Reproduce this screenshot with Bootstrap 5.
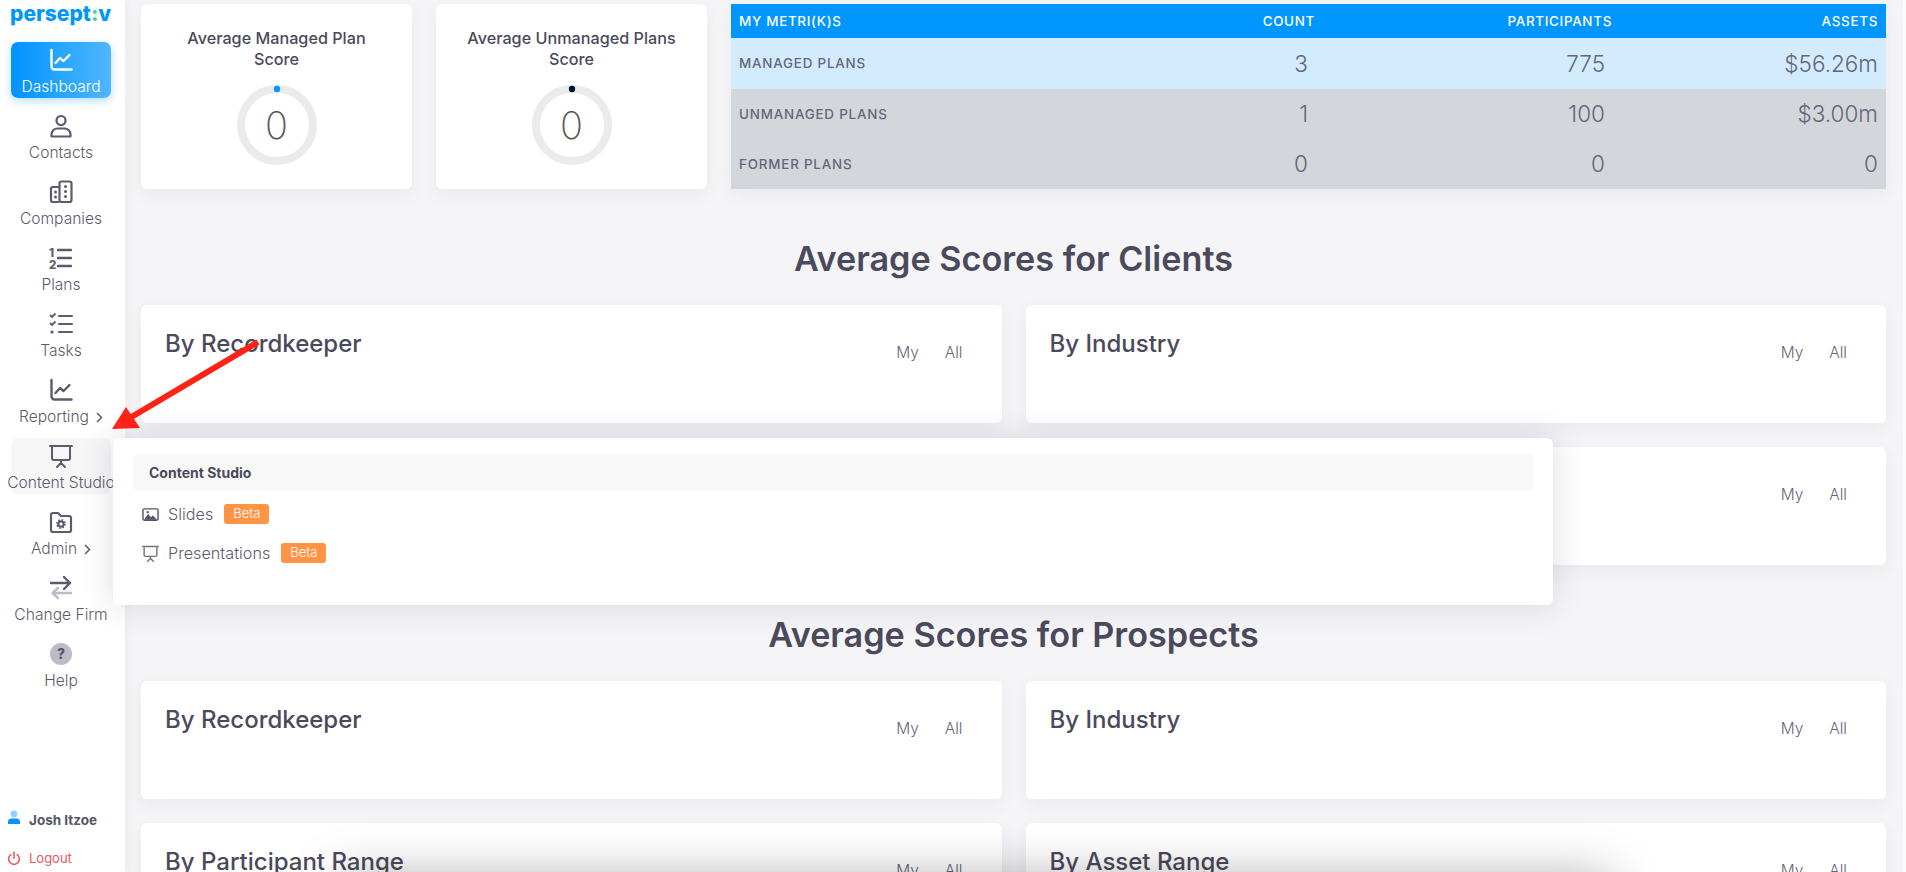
<!DOCTYPE html>
<html lang="en">
<head>
<meta charset="utf-8">
<title>Dashboard</title>
<link href="https://cdn.jsdelivr.net/npm/bootstrap@5.3.0/dist/css/bootstrap.min.css" rel="stylesheet">
<style>
html,body{height:100%;}
body{font-family:"Inter","Noto Sans",sans-serif;background:#fbfbfc;color:#4b4a5c;overflow:hidden;}
.app-shell{height:872px;position:relative;overflow:hidden;}
.side-rail{width:125px;flex:0 0 125px;background:#fff;box-shadow:2px 0 8px rgba(60,60,90,.06);z-index:2;}
.brand-word{font-family:"Inter",sans-serif;font-weight:800;font-size:21px;line-height:27px;color:#0096ff;height:42px;padding-left:10px;white-space:nowrap;}
.brand-word span{color:#44d3a8;}
.rail-list{gap:10px;padding:0 14px 0 11px;}
.rail-item{height:56px;padding-top:6px;border-radius:7px;color:#5c5b6e;font-size:15.6px;font-weight:300;line-height:20px;white-space:nowrap;text-decoration:none;}
.rail-item svg.ico{width:24px;height:24px;margin-bottom:5px;flex:none;}
.rail-item.is-active{background:linear-gradient(90deg,#0093ff,#50b7ff);color:#fff;box-shadow:0 3px 10px rgba(0,150,255,.3);}
.rail-item.is-hover{background:#f6f6f7;}
.chev{width:7px;height:11px;margin-left:7px;}
.rail-foot{padding:0 0 4px 7px;}
.who{font-size:13.5px;font-weight:700;color:#55546a;line-height:20px;height:38px;}
.bye{font-size:13px;color:#e65a60;line-height:20px;height:20px;}
.rail-foot svg{width:14px;height:15px;margin-right:8px;}
.main-pane{margin-right:3px;padding:4px 17px 0 16px;background:#f5f5f8;min-width:0;}
.score-card,.range-card{border:0;border-radius:6px;background:#fff;box-shadow:0 6px 18px rgba(60,60,90,.06);}
.score-card{width:271px;height:185px;flex:none;padding-top:24px;text-align:center;font-size:16.2px;font-weight:500;line-height:21px;}
.score-title{height:42px;padding:0 30px;}
.gauge{width:80px;height:80px;margin:15px auto 0;position:relative;}
.gauge svg{position:absolute;inset:0;}
.gauge b{position:absolute;inset:0;display:flex;align-items:center;justify-content:center;font-weight:200;font-size:38px;color:#555;}
.metric-wrap{box-shadow:0 6px 18px rgba(60,60,90,.06);height:185px;}
.metric-table{table-layout:fixed;margin:0;color:#5c5b6e;}
.metric-table th,.metric-table td{border:0;padding:0 8px;vertical-align:middle;text-align:right;}
.metric-table th{height:34px;font-size:13.4px;font-weight:500;letter-spacing:.7px;background:#0096ff;color:#fff;}
.metric-table th:first-child,.metric-table td:first-child{text-align:left;}
.metric-table td{height:50px;font-size:22.5px;font-weight:300;color:#66657a;background:#d3d7db;}
.metric-table td:first-child{font-size:13.4px;font-weight:500;letter-spacing:.8px;}
.metric-table td.pad-num{padding-right:15px;}
.metric-table tr.row-managed td{height:51px;background:#d3ecfd;}
.col-label{width:auto;}
.col-count{width:120px;}
.col-part{width:297px;}
.col-asset{width:266px;}
.section-head{font-size:34.2px;line-height:38px;font-weight:600;text-align:center;color:#4b4a5c;margin:51px 0 27px;}
.range-card{height:118px;padding:25px 39px 0 24px;}
.range-title{font-size:24px;line-height:28px;font-weight:500;margin:0;color:#4b4a5c;}
.range-toggle{gap:26px;font-size:15.5px;line-height:20px;font-weight:300;color:#66657a;margin-top:13px;}
.pop-menu{position:absolute;left:113px;top:438px;width:1440px;height:167px;background:#fff;border-radius:6px;box-shadow:0 0 32px rgba(50,50,80,.17);z-index:5;padding:16px 19px 0 20px;}
.pop-head{height:37px;background:#f8f8f9;border-radius:6px;padding-left:16px;font-size:14px;font-weight:700;color:#4b4a5c;display:flex;align-items:center;}
.pop-row{height:20px;margin-left:9px;font-size:16.2px;font-weight:300;color:#5c5b6e;gap:9px;}
.pop-row svg{width:17px;height:17px;flex:none;}
.pop-rows{gap:19px;margin-top:13px;}
.beta-tag{background:#ff9445;color:#fff;font-size:13px;font-weight:300;border-radius:3px;height:20px;width:45px;display:flex;align-items:center;justify-content:center;margin-left:2px;}
.anno-arrow{position:absolute;left:0;top:0;width:300px;height:450px;z-index:6;pointer-events:none;}
.bottom-glow{position:absolute;left:350px;width:1250px;top:888px;height:40px;box-shadow:0 0 50px 10px rgba(0,0,0,.34);z-index:4;}
</style>
</head>
<body>
<svg width="0" height="0" class="position-absolute">
<defs>
<symbol id="i-chart" viewBox="0 0 24 24"><path d="M2.5 2v16.5a3 3 0 0 0 3 3h17" fill="none" stroke="currentColor" stroke-width="2.4" stroke-linecap="round"/><path d="M6.5 15l4.5-5 3.5 3 6-6" fill="none" stroke="currentColor" stroke-width="2.4" stroke-linecap="round" stroke-linejoin="round"/></symbol>
<symbol id="i-screen" viewBox="0 0 24 24"><path d="M1 2h22" stroke="currentColor" stroke-width="2" stroke-linecap="round"/><path d="M3 3v11a2 2 0 0 0 2 2h14a2 2 0 0 0 2-2V3" fill="none" stroke="currentColor" stroke-width="2"/><path d="M12 16v3M12 19l-4 4M12 19l4 4" fill="none" stroke="currentColor" stroke-width="2" stroke-linecap="round"/></symbol>
</defs>
</svg>
<div class="app-shell d-flex">
<aside class="side-rail d-flex flex-column">
<div class="brand-word">persept<span>:</span>v</div>
<nav class="rail-list d-flex flex-column">
<a class="rail-item is-active d-flex flex-column align-items-center"><svg class="ico"><use href="#i-chart"/></svg>Dashboard</a>
<a class="rail-item d-flex flex-column align-items-center"><svg class="ico" viewBox="0 0 24 24"><circle cx="12" cy="6.5" r="4.5" fill="none" stroke="currentColor" stroke-width="2.2"/><path d="M2.5 22.5v-2a6 6 0 0 1 6-6h7a6 6 0 0 1 6 6v2z" fill="none" stroke="currentColor" stroke-width="2.2" stroke-linejoin="round"/></svg>Contacts</a>
<a class="rail-item d-flex flex-column align-items-center"><svg class="ico" viewBox="0 0 24 24"><path d="M10 7H4a2 2 0 0 0-2 2v11a2 2 0 0 0 2 2h6" fill="none" stroke="currentColor" stroke-width="2.2"/><rect x="10.5" y="1.5" width="12" height="20.5" rx="2" fill="none" stroke="currentColor" stroke-width="2.2"/><g fill="currentColor"><circle cx="16.5" cy="6.5" r="1.5"/><circle cx="16.5" cy="11.5" r="1.5"/><circle cx="16.5" cy="16.5" r="1.5"/><circle cx="6.5" cy="12" r="1.5"/><circle cx="6.5" cy="17" r="1.5"/></g></svg>Companies</a>
<a class="rail-item d-flex flex-column align-items-center"><svg class="ico" viewBox="0 0 24 24"><text x="0" y="11" font-family="Inter,sans-serif" font-size="11.5" font-weight="800" fill="currentColor">1</text><text x="0" y="23" font-family="Inter,sans-serif" font-size="11.5" font-weight="800" fill="currentColor">2</text><path d="M9 4h13M9 12h13M9 20h13" stroke="currentColor" stroke-width="2.4" stroke-linecap="round"/></svg>Plans</a>
<a class="rail-item d-flex flex-column align-items-center"><svg class="ico" viewBox="0 0 24 24"><path d="M1 3l2 2 3.5-3.5M1 11l2 2 3.5-3.5" fill="none" stroke="currentColor" stroke-width="1.8"/><circle cx="3" cy="20" r="1.6" fill="currentColor"/><path d="M10 4h13M10 12h13M10 20h13" stroke="currentColor" stroke-width="2.2" stroke-linecap="round"/></svg>Tasks</a>
<a class="rail-item d-flex flex-column align-items-center"><svg class="ico"><use href="#i-chart"/></svg><span>Reporting<svg class="chev" viewBox="0 0 7 11"><path d="M1 1l4.5 4.5L1 10" fill="none" stroke="currentColor" stroke-width="1.5"/></svg></span></a>
<a class="rail-item is-hover d-flex flex-column align-items-center"><svg class="ico"><use href="#i-screen"/></svg>Content Studio</a>
<a class="rail-item d-flex flex-column align-items-center"><svg class="ico" viewBox="0 0 24 24"><path d="M2 5a2 2 0 0 1 2-2h5l3 3h8a2 2 0 0 1 2 2v12a2 2 0 0 1-2 2H4a2 2 0 0 1-2-2z" fill="none" stroke="currentColor" stroke-width="2.2" stroke-linejoin="round"/><circle cx="12" cy="14" r="2.6" fill="none" stroke="currentColor" stroke-width="2.2"/><circle cx="12" cy="14" r="4.2" fill="none" stroke="currentColor" stroke-width="1.5" stroke-dasharray="1.6 1.7"/></svg><span>Admin<svg class="chev" viewBox="0 0 7 11"><path d="M1 1l4.5 4.5L1 10" fill="none" stroke="currentColor" stroke-width="1.5"/></svg></span></a>
<a class="rail-item d-flex flex-column align-items-center"><svg class="ico" viewBox="0 0 24 24"><path d="M2 8h19M15 2l6 6-6 6" fill="none" stroke="currentColor" stroke-width="2.4" stroke-linecap="round" stroke-linejoin="round" transform="translate(0 -1)"/><path d="M22 16H4M9 11l-5.5 5L9 21" fill="none" stroke="#bcbcc6" stroke-width="2.4" stroke-linecap="round" stroke-linejoin="round" transform="translate(0 1)"/></svg>Change Firm</a>
<a class="rail-item d-flex flex-column align-items-center"><svg class="ico" viewBox="0 0 24 24"><circle cx="12" cy="12" r="11" fill="#bcbcc6"/><text x="12" y="17" text-anchor="middle" font-family="Inter,sans-serif" font-size="14" font-weight="800" fill="#55546a">?</text></svg>Help</a>
</nav>
<div class="rail-foot mt-auto">
<div class="who d-flex align-items-start"><svg viewBox="0 0 14 15"><circle cx="7" cy="4" r="3.4" fill="#8fd2ff"/><path d="M1 14v-2a3.5 3.5 0 0 1 3.5-3.5h5A3.5 3.5 0 0 1 13 12v2z" fill="#0096ff"/></svg>Josh Itzoe</div>
<div class="bye d-flex align-items-center"><svg viewBox="0 0 14 15"><path d="M7 1.2v6" stroke="#e65a60" stroke-width="1.6" stroke-linecap="round"/><path d="M3.8 3.6a5.4 5.4 0 1 0 6.4 0" fill="none" stroke="#e65a60" stroke-width="1.6" stroke-linecap="round"/></svg>Logout</div>
</div>
</aside>
<main class="main-pane flex-grow-1">
<div class="d-flex gap-4">
<div class="card score-card"><div class="score-title">Average Managed Plan Score</div><div class="gauge"><svg viewBox="0 0 80 80"><circle cx="40" cy="40" r="36" fill="none" stroke="#ebebeb" stroke-width="8"/><circle cx="40" cy="4" r="3.2" fill="#0096ff"/></svg><b>0</b></div></div>
<div class="card score-card"><div class="score-title">Average Unmanaged Plans Score</div><div class="gauge"><svg viewBox="0 0 80 80"><circle cx="40" cy="40" r="36" fill="none" stroke="#ebebeb" stroke-width="8"/><circle cx="40" cy="4" r="3.2" fill="#02142b"/></svg><b>0</b></div></div>
<div class="metric-wrap flex-grow-1">
<table class="table metric-table">
<colgroup><col class="col-label"><col class="col-count"><col class="col-part"><col class="col-asset"></colgroup>
<thead><tr><th>MY METRI(K)S</th><th>COUNT</th><th>PARTICIPANTS</th><th>ASSETS</th></tr></thead>
<tbody>
<tr class="row-managed"><td>MANAGED PLANS</td><td class="pad-num">3</td><td class="pad-num">775</td><td>$56.26m</td></tr>
<tr><td>UNMANAGED PLANS</td><td class="pad-num">1</td><td class="pad-num">100</td><td>$3.00m</td></tr>
<tr><td>FORMER PLANS</td><td class="pad-num">0</td><td class="pad-num">0</td><td>0</td></tr>
</tbody>
</table>
</div>
</div>
<h2 class="section-head">Average Scores for Clients</h2>
<div class="row g-4">
<div class="col-6"><div class="card range-card flex-row justify-content-between"><h3 class="range-title">By Recordkeeper</h3><div class="range-toggle d-flex"><span>My</span><span>All</span></div></div></div>
<div class="col-6"><div class="card range-card flex-row justify-content-between"><h3 class="range-title">By Industry</h3><div class="range-toggle d-flex"><span>My</span><span>All</span></div></div></div>
<div class="col-6"><div class="card range-card flex-row justify-content-between"><h3 class="range-title">By Participant Range</h3><div class="range-toggle d-flex"><span>My</span><span>All</span></div></div></div>
<div class="col-6"><div class="card range-card flex-row justify-content-between"><h3 class="range-title">By Asset Range</h3><div class="range-toggle d-flex"><span>My</span><span>All</span></div></div></div>
</div>
<h2 class="section-head">Average Scores for Prospects</h2>
<div class="row g-4">
<div class="col-6"><div class="card range-card flex-row justify-content-between"><h3 class="range-title">By Recordkeeper</h3><div class="range-toggle d-flex"><span>My</span><span>All</span></div></div></div>
<div class="col-6"><div class="card range-card flex-row justify-content-between"><h3 class="range-title">By Industry</h3><div class="range-toggle d-flex"><span>My</span><span>All</span></div></div></div>
<div class="col-6"><div class="card range-card flex-row justify-content-between"><h3 class="range-title">By Participant Range</h3><div class="range-toggle d-flex"><span>My</span><span>All</span></div></div></div>
<div class="col-6"><div class="card range-card flex-row justify-content-between"><h3 class="range-title">By Asset Range</h3><div class="range-toggle d-flex"><span>My</span><span>All</span></div></div></div>
</div>
</main>
<div class="pop-menu">
<div class="pop-head">Content Studio</div>
<div class="pop-rows d-flex flex-column">
<div class="pop-row d-flex align-items-center"><svg viewBox="0 0 18 18"><rect x="1" y="3" width="16" height="12" rx="1.5" fill="none" stroke="#55546a" stroke-width="1.5"/><path d="M2 14.5l4.5-6 3 3.5 2-2 4.5 4.5z" fill="#55546a"/><circle cx="6" cy="6.5" r="1.2" fill="#55546a"/></svg>Slides<span class="beta-tag">Beta</span></div>
<div class="pop-row d-flex align-items-center"><svg class="text-secondary"><use href="#i-screen"/></svg>Presentations<span class="beta-tag">Beta</span></div>
</div>
</div>
<svg class="anno-arrow" viewBox="0 0 300 450"><path d="M258 342L128 419" stroke="#ff2217" stroke-width="6" fill="none"/><path d="M112 429L126 407 140 428z" fill="#ff2217"/></svg>
<div class="bottom-glow"></div>
</div>
<script src="https://cdn.jsdelivr.net/npm/bootstrap@5.3.0/dist/js/bootstrap.bundle.min.js"></script>
</body>
</html>
